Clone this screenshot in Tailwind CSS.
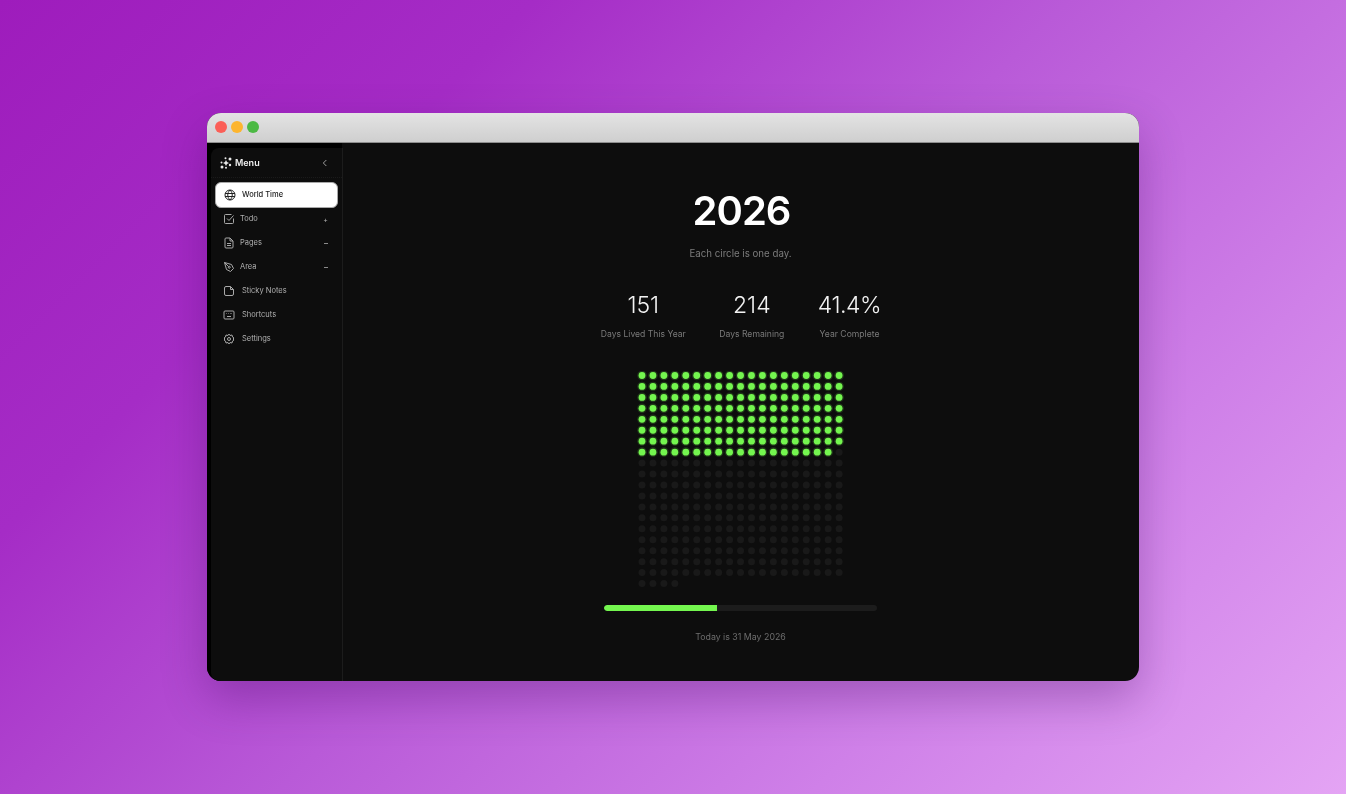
<!DOCTYPE html>
<html lang="en">
<head>
    <meta charset="UTF-8">
    <meta name="viewport" content="width=device-width, initial-scale=1.0">
    <title>2026</title>
    <script src="https://cdn.jsdelivr.net/npm/@tailwindcss/browser@4"></script>
</head>
<body class="h-screen w-screen overflow-hidden bg-[linear-gradient(135deg,#9e1cbc_0%,#a52cc6_25%,#b95ad8_50%,#cf80e8_75%,#e4a4f4_100%)] font-['Inter',sans-serif] [font-optical-sizing:none] pt-[113px] pl-[207px]">
    <div class="w-[932px] h-[568px] rounded-[14px] overflow-hidden flex flex-col bg-[#0d0d0d] shadow-[0_18px_45px_rgba(60,0,90,0.3)] [will-change:transform]">
        <!-- title bar -->
        <div class="h-[30px] shrink-0 flex items-center gap-[4px] pl-[8px] pb-[1px] bg-[linear-gradient(#e3e3e3,#cfcfcf)] border-b border-[#8e8e8e]">
            <span class="w-[12px] h-[12px] rounded-full bg-[#fb5f57]"></span>
            <span class="w-[12px] h-[12px] rounded-full bg-[#fdb52e]"></span>
            <span class="w-[12px] h-[12px] rounded-full bg-[#4cb944]"></span>
        </div>
        <div class="flex-1 flex min-h-0">
            <!-- sidebar -->
            <aside class="w-[135px] shrink-0 bg-black pl-[4px] pt-[5px] flex">
                <div class="flex-1 bg-[#0d0d0d] rounded-tl-[8px] rounded-bl-[8px] border-r border-[#1c1c1c] mr-[1px] flex flex-col">
                    <div class="h-[30px] shrink-0 flex items-center pl-[9px] pr-[13px] border-b border-dotted border-[#1a1a1a]">
                        <svg class="w-[12px] h-[12px] mr-[3px]" viewBox="0 0 24 24" fill="#e8e8e8">
                            <path d="M12 6l2 4 4 2-4 2-2 4-2-4-4-2 4-2z"/><circle cx="20" cy="4" r="3"/><circle cx="4" cy="20" r="3"/><circle cx="20" cy="16" r="2.4"/><circle cx="11" cy="2.5" r="2"/><circle cx="3" cy="11" r="2"/><circle cx="12" cy="21.5" r="2"/>
                        </svg>
                        <span class="text-[9px] font-semibold text-[#f0f0f0]">Menu</span>
                        <svg class="ml-auto w-[8px] h-[8px]" viewBox="0 0 24 24" fill="none" stroke="#9a9a9a" stroke-width="3"><path d="M16 3 L7 12 L16 21"/></svg>
                    </div>
                    <div class="mx-[4px] mt-[4px] h-[26px] w-[123px] bg-white rounded-[6px] border border-[#a8a8a8] flex items-center pl-[8px] text-[#1a1a1a] shrink-0">
                        <svg class="w-[12px] h-[12px] mr-[6px]" viewBox="0 0 24 24" fill="none" stroke="#222" stroke-width="2"><circle cx="12" cy="12" r="10"/><path d="M2 9h20M2 15h20M12 2c-6 6-6 14 0 20M12 2c6 6 6 14 0 20"/></svg>
                        <span class="text-[7.5px] font-medium">World Time</span>
                    </div>
                    <nav class="mt-[-1px] text-[7.5px] text-[#b0b0b0]">
                        <div class="h-[24px] flex items-center pl-[12px] pr-[14px]">
                            <svg class="w-[12px] h-[12px] mr-[5px]" viewBox="0 0 24 24" fill="none" stroke="#a8a8a8" stroke-width="2"><path d="M21 11v8a2 2 0 0 1-2 2H5a2 2 0 0 1-2-2V5a2 2 0 0 1 2-2h12"/><path d="M8 11l4 4 9-10"/></svg>
                            <span>Todo</span><span class="ml-auto text-[7px] leading-none">+</span>
                        </div>
                        <div class="h-[24px] flex items-center pl-[12px] pr-[14px]">
                            <svg class="w-[12px] h-[12px] mr-[5px]" viewBox="0 0 24 24" fill="none" stroke="#a8a8a8" stroke-width="2"><path d="M14 2H6a2 2 0 0 0-2 2v16a2 2 0 0 0 2 2h12a2 2 0 0 0 2-2V8z"/><path d="M14 2v6h6M8 13h8M8 17h8"/></svg>
                            <span>Pages</span><span class="ml-auto w-[4px] h-px bg-[#8a8a8a]"></span>
                        </div>
                        <div class="h-[24px] flex items-center pl-[12px] pr-[14px]">
                            <svg class="w-[12px] h-[12px] mr-[5px]" viewBox="0 0 24 24" fill="none" stroke="#a8a8a8" stroke-width="2"><path d="M3 3l4 14 8 4 6-6-4-8z"/><path d="M3 3l8 8"/><circle cx="12.5" cy="12.5" r="2"/></svg>
                            <span>Area</span><span class="ml-auto w-[4px] h-px bg-[#8a8a8a]"></span>
                        </div>
                        <div class="h-[24px] flex items-center pl-[12px] pr-[14px]">
                            <svg class="w-[12px] h-[12px] mr-[7px]" viewBox="0 0 24 24" fill="none" stroke="#a8a8a8" stroke-width="2"><path d="M15 3H6a3 3 0 0 0-3 3v12a3 3 0 0 0 3 3h12a3 3 0 0 0 3-3V9z"/><path d="M15 3v6h6"/></svg>
                            <span>Sticky Notes</span>
                        </div>
                        <div class="h-[24px] flex items-center pl-[12px] pr-[14px]">
                            <svg class="w-[12px] h-[12px] mr-[7px]" viewBox="0 0 24 24" fill="none" stroke="#a8a8a8" stroke-width="2"><rect x="2" y="4" width="20" height="16" rx="2"/><path d="M6 9h1M10 9h1M14 9h1M17 9h1M8 15h8"/></svg>
                            <span>Shortcuts</span>
                        </div>
                        <div class="h-[24px] flex items-center pl-[12px] pr-[14px]">
                            <svg class="w-[12px] h-[12px] mr-[7px]" viewBox="0 0 24 24" fill="none" stroke="#a8a8a8" stroke-width="2"><circle cx="12" cy="12" r="3"/><path d="M12 2l2 3 4-1 1 4 3 2-2 2 2 2-3 2-1 4-4-1-2 3-2-3-4 1-1-4-3-2 2-2-2-2 3-2 1-4 4 1z"/></svg>
                            <span>Settings</span>
                        </div>
                    </nav>
                </div>
            </aside>
            <!-- main -->
            <main class="flex-1 flex flex-col items-center pt-[46px]">
                <h1 class="text-[40px] leading-[44px] font-semibold tracking-tight text-white translate-x-[1px]">2026</h1>
                <p class="mt-[14px] text-[9.7px] leading-[14px] text-[#7c7c7c]">Each circle is one day.</p>
                <div class="mt-[29px] flex justify-center gap-[33.5px] translate-x-[0.5px]">
                    <div class="flex flex-col items-center">
                        <span class="text-[23px] leading-[30px] font-light text-[#f2f2f2]">151</span>
                        <span class="mt-[7.5px] text-[8.6px] leading-[12px] text-[#7a7a7a]">Days Lived This Year</span>
                    </div>
                    <div class="flex flex-col items-center">
                        <span class="text-[23px] leading-[30px] font-light text-[#f2f2f2]">214</span>
                        <span class="mt-[7.5px] text-[8.6px] leading-[12px] text-[#7a7a7a]">Days Remaining</span>
                    </div>
                    <div class="flex flex-col items-center">
                        <span class="text-[23px] leading-[30px] font-light tracking-[-0.02em] text-[#f2f2f2]">41.4%</span>
                        <span class="mt-[7.5px] text-[8.6px] leading-[12px] text-[#7a7a7a]">Year Complete</span>
                    </div>
                </div>
                <svg id="dots" class="mt-[31px] w-[208px] h-[219px] shrink-0" viewBox="0 0 208 219"></svg>
                <div class="mt-[15px] w-[273px] h-[6px] rounded-full bg-[#1c1c1c] overflow-hidden">
                    <div class="h-full bg-[#74f64f] rounded-l-full" style="width: 41.4%"></div>
                </div>
                <p class="mt-[20px] text-[8.8px] leading-[12px] text-[#6e6e6e]">Today is 31 May 2026</p>
            </main>
        </div>
    </div>

    <script>
        // One circle per day of the year, lived days in green
        const dots = document.getElementById('dots');
        const addCircle = (cx, cy, r, fill, opacity) => {
            const circle = document.createElementNS('http://www.w3.org/2000/svg', 'circle');
            circle.setAttribute('cx', cx);
            circle.setAttribute('cy', cy);
            circle.setAttribute('r', r);
            circle.setAttribute('fill', fill);
            circle.setAttribute('opacity', opacity);
            dots.appendChild(circle);
        };
        for (let i = 0; i < 365; i++) {
            const cx = 5 + (i % 19) * 10.95;
            const cy = 4.5 + Math.floor(i / 19) * 10.95;
            if (i < 151) {
                addCircle(cx, cy, 4.8, '#74f64f', 0.18);
                addCircle(cx, cy, 3.4, '#74f64f', 1);
            } else {
                addCircle(cx, cy, 3.5, '#191919', 1);
            }
        }
    </script>
</body>
</html>
